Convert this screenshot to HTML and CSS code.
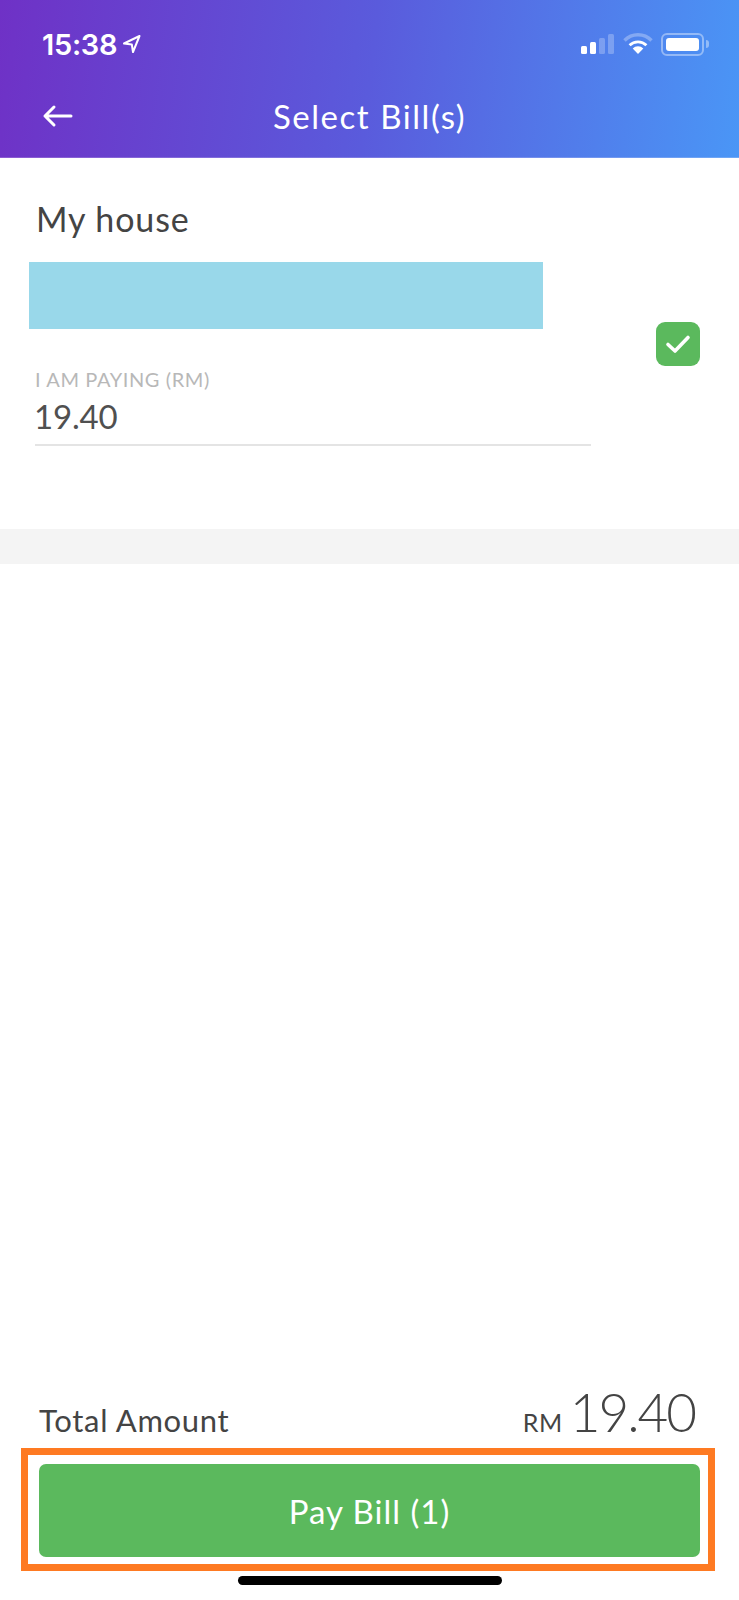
FILE: index.html
```html
<!DOCTYPE html>
<html lang="en">
<head>
    <meta charset="UTF-8">
    <meta name="viewport" content="width=device-width, initial-scale=1.0">
    <title>Select Bill(s)</title>
    <link rel="stylesheet" href="styles.css">
</head>
<body>
    <div class="screen">
        <header class="header">
            <div class="status-bar">
                <div class="status-time">
                    <span>15:38</span>
                    <svg class="location" width="20" height="20" viewBox="0 0 20 20"><path d="M17.500 2 2 9.500l7.800 1 1.200 7.500z" fill="none" stroke="#fff" stroke-width="2" stroke-linejoin="round"/></svg>
                </div>
                <div class="status-icons">
                    <svg width="34" height="22" viewBox="0 0 34 22">
                        <rect x="0" y="13" width="6" height="8" rx="1.5" fill="#fff"/>
                        <rect x="9" y="9" width="6" height="12" rx="1.5" fill="#fff"/>
                        <rect x="18" y="5" width="6" height="16" rx="1.5" fill="#fff" fill-opacity=".25"/>
                        <rect x="27" y="1" width="6" height="20" rx="1.5" fill="#fff" fill-opacity=".25"/>
                    </svg>
                    <svg width="30" height="22" viewBox="0 0 30 22">
                        <path d="M15 21 9.700 15.400a7.500 7.500 0 0 1 10.600 0z" fill="#fff"/>
                        <path d="M6.600 12.300a12 12 0 0 1 16.800 0" fill="none" stroke="#fff" stroke-width="2.800"/>
                        <path d="M1.500 7.500a19 19 0 0 1 27 0" fill="none" stroke="#fff" stroke-opacity=".3" stroke-width="3.500"/>
                    </svg>
                    <div class="battery">
                        <div class="battery-body"><div class="battery-fill"></div></div>
                        <div class="battery-cap"></div>
                    </div>
                </div>
            </div>
            <div class="nav-bar">
                <svg class="back" width="32" height="24" viewBox="0 0 32 24"><path d="M3 12H29M12 3 3 12l9 9" fill="none" stroke="#fff" stroke-width="3" stroke-linecap="round" stroke-linejoin="round"/></svg>
                <h1 class="nav-title">Select Bill(s)</h1>
            </div>
        </header>

        <main class="main">
            <section class="bill">
                <div class="bill-info">
                    <h2 class="bill-name">My house</h2>
                    <div class="bill-mask"></div>
                    <div class="amount-field">
                        <div class="amount-label">I AM PAYING (RM)</div>
                        <div class="amount-value">19.40</div>
                    </div>
                </div>
                <div class="checkbox">
                    <svg width="26" height="22" viewBox="0 0 26 22"><path d="M3 11.500 10 18 23 4.500" fill="none" stroke="#fff" stroke-width="3.600" stroke-linecap="round" stroke-linejoin="round"/></svg>
                </div>
            </section>
            <div class="band"></div>
        </main>

        <footer class="footer">
            <div class="total">
                <span class="total-label">Total Amount</span>
                <span class="total-amount"><span class="total-currency">RM</span>19.40</span>
            </div>
            <div class="highlight">
                <button class="pay-button">Pay Bill (1)</button>
            </div>
            <div class="home-indicator"></div>
        </footer>
    </div>
</body>
</html>
```

FILE: styles.css
```css
* {
    box-sizing: border-box;
}
body {
    margin: 0;
    background: white;
    font-family: Lato, "Open Sans", sans-serif;
    color: #444;
}
.screen {
    display: flex;
    flex-direction: column;
    width: 739px;
    height: 1600px;
    overflow: hidden;
}
.header {
    height: 158px;
    padding: 30px 30px 0 42px;
    background: linear-gradient(97deg, #6f31c6 0%, #5a5bdc 50%, #4a96f6 100%);
    color: white;
    border-bottom: 1px solid rgba(255,255,255,0.2);
}
.status-bar {
    display: flex;
    justify-content: space-between;
    align-items: center;
    height: 28px;
}
.status-time {
    display: flex;
    align-items: center;
    gap: 5px;
    font-family: Inter, sans-serif;
    font-size: 29px;
    font-weight: 600;
    letter-spacing: -0.3px;
}
.status-icons {
    display: flex;
    align-items: center;
    gap: 8px;
}
.battery {
    display: flex;
    align-items: center;
    gap: 2px;
}
.battery-body {
    width: 43px;
    height: 23px;
    padding: 3px;
    border: 2px solid rgba(255,255,255,0.4);
    border-radius: 6px;
}
.battery-fill {
    height: 100%;
    background: white;
    border-radius: 3px;
}
.battery-cap {
    width: 3px;
    height: 8px;
    background: rgba(255,255,255,0.4);
    border-radius: 0 3px 3px 0;
}
.nav-bar {
    display: flex;
    align-items: center;
    justify-content: center;
    position: relative;
    margin-top: 38px;
    height: 40px;
}
.back {
    position: absolute;
    left: 0;
    top: 8px;
}
.nav-title {
    margin: 0 0 0 -12px;
    font-size: 33px;
    font-weight: 400;
    letter-spacing: 1.55px;
}
.main {
    flex: 1;
}
.bill {
    display: flex;
    align-items: center;
    justify-content: space-between;
    height: 371px;
    padding: 0 39px 0 29px;
}
.bill-info {
    align-self: flex-start;
    width: 562px;
}
.bill-name {
    margin: 41px 0 0 7px;
    font-size: 34px;
    line-height: 40px;
    font-weight: 400;
    letter-spacing: 0.9px;
}
.bill-mask {
    width: 514px;
    height: 67px;
    margin-top: 23px;
    background: #99d8ea;
}
.amount-field {
    margin: 38px 0 0 6px;
    padding-bottom: 9px;
    border-bottom: 2px solid #e4e4e4;
}
.amount-label {
    font-size: 20px;
    line-height: 24px;
    font-weight: 400;
    letter-spacing: 0.6px;
    color: #b8b8b8;
}
.amount-value {
    margin: 6px 0 0 -1px;
    font-size: 33px;
    line-height: 38px;
    font-weight: 400;
    letter-spacing: -0.2px;
    color: #505050;
}
.checkbox {
    display: flex;
    align-items: center;
    justify-content: center;
    width: 44px;
    height: 44px;
    background: #5bb95d;
    border-radius: 9px;
}
.band {
    height: 35px;
    background: #f4f4f4;
}
.footer {
    padding: 0 24px 15px 21px;
}
.total {
    display: flex;
    justify-content: space-between;
    align-items: baseline;
    padding: 0 20px 0 18px;
}
.total-label {
    font-size: 31px;
    letter-spacing: 0.7px;
}
.total-amount {
    font-size: 53px;
    line-height: 52px;
    font-weight: 300;
    letter-spacing: -2px;
}
.total-currency {
    margin-right: 7px;
    font-size: 25px;
    font-weight: 400;
    letter-spacing: 0.5px;
}
.highlight {
    height: 123px;
    padding: 9px 8px 7px 11px;
    border: 7px solid #fe7a22;
}
.pay-button {
    display: block;
    width: 100%;
    height: 93px;
    border: none;
    border-radius: 7px;
    background: #5bb95d;
    color: white;
    font-family: inherit;
    font-size: 33px;
    letter-spacing: 1px;
}
.home-indicator {
    width: 264px;
    height: 9px;
    margin: 5px 0 0 217px;
    background: black;
    border-radius: 5px;
}
```
